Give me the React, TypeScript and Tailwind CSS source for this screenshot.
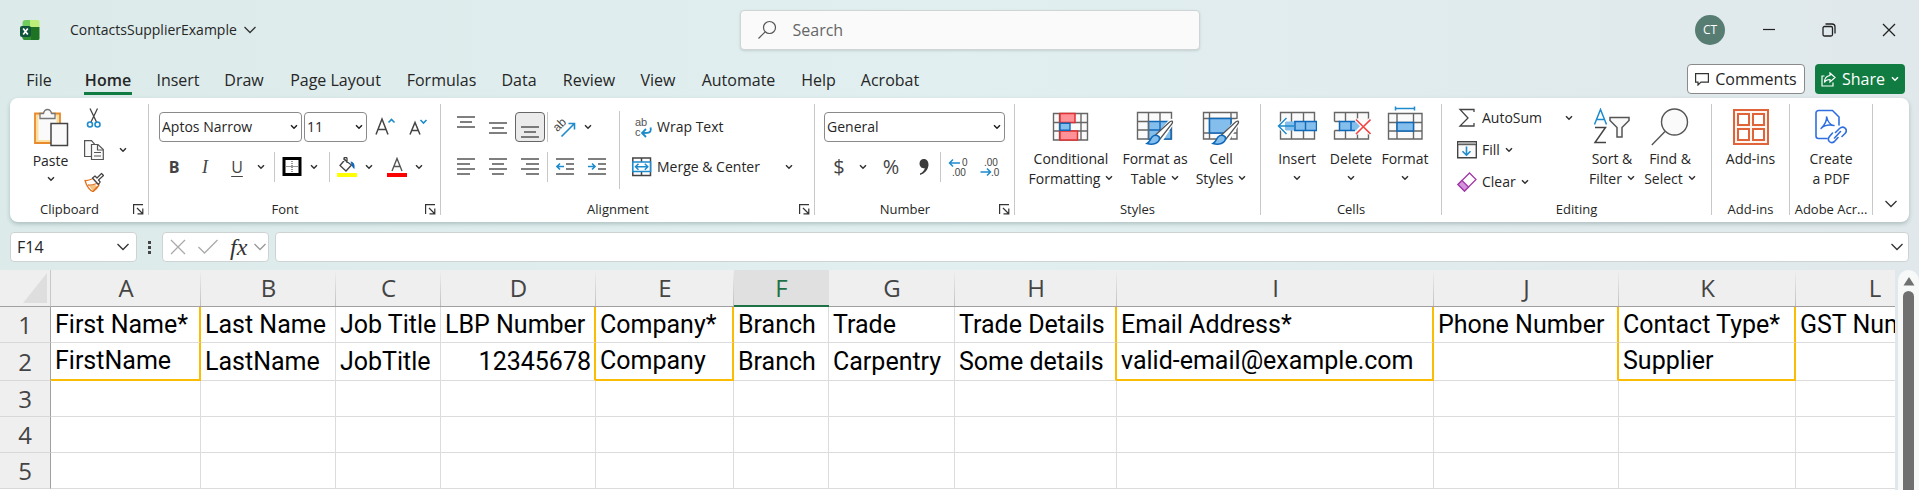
import React, { useState } from 'react';
import clsx from 'clsx';

type IconProps = { className?: string };

const TABS = [
  { name: 'File', width: 'w-[26px]' },
  { name: 'Home', width: 'w-[48px]' },
  { name: 'Insert', width: 'w-[44px]' },
  { name: 'Draw', width: 'w-[40px]' },
  { name: 'Page Layout', width: 'w-[95px]' },
  { name: 'Formulas', width: 'w-[69px]' },
  { name: 'Data', width: 'w-[38px]' },
  { name: 'Review', width: 'w-[54px]' },
  { name: 'View', width: 'w-[36px]' },
  { name: 'Automate', width: 'w-[77px]' },
  { name: 'Help', width: 'w-[35px]' },
  { name: 'Acrobat', width: 'w-[60px]' },
];

const COLUMNS = [
  { id: 'A', width: 'w-[150px]', cells: ['First Name*', 'FirstName'], required: true },
  { id: 'B', width: 'w-[135px]', cells: ['Last Name', 'LastName'] },
  { id: 'C', width: 'w-[105px]', cells: ['Job Title', 'JobTitle'] },
  { id: 'D', width: 'w-[155px]', cells: ['LBP Number', '12345678'] },
  { id: 'E', width: 'w-[138px]', cells: ['Company*', 'Company'], required: true },
  { id: 'F', width: 'w-[95px]', cells: ['Branch', 'Branch'] },
  { id: 'G', width: 'w-[126px]', cells: ['Trade', 'Carpentry'] },
  { id: 'H', width: 'w-[162px]', cells: ['Trade Details', 'Some details'] },
  { id: 'I', width: 'w-[317px]', cells: ['Email Address*', 'valid-email@example.com'], required: true },
  { id: 'J', width: 'w-[185px]', cells: ['Phone Number', ''] },
  { id: 'K', width: 'w-[177px]', cells: ['Contact Type*', 'Supplier'], required: true },
  { id: 'L', width: 'w-[158px]', cells: ['GST Number', ''] },
];

const ROWS = [1, 2, 3, 4, 5];

/* ---------- icons ---------- */

const Chevron: React.FC<IconProps> = ({ className = 'text-[#333]' }) => (
  <svg width="8" height="6" viewBox="0 0 8 6" fill="none" stroke="currentColor" strokeWidth="1.5" className={clsx('shrink-0', className)}>
    <path d="M1 1.2 4 4.2 7 1.2" />
  </svg>
);

const WideChevron: React.FC<IconProps> = ({ className = 'text-[#333]' }) => (
  <svg width="14" height="8" viewBox="0 0 14 8" fill="none" stroke="currentColor" strokeWidth="1.3" className={clsx('shrink-0', className)}>
    <path d="M1.5 1 7 6.5 12.5 1" />
  </svg>
);

const ExcelLogo = () => (
  <svg width="20" height="20" viewBox="0 0 20 20">
    <path d="M10 0h8a1.500 1.500 0 0 1 1.500 1.500V7H10Z" fill="#bdee78" />
    <path d="M2.500 3A3 3 0 0 1 5.500 0H10v7H2.500Z" fill="#6fce5f" />
    <path d="M10 7h9.500v11.500A1.500 1.500 0 0 1 18 20H5.500a3 3 0 0 1-3-3v-4Z" fill="#1f7423" />
    <path d="M2.500 16h8.500v4H5.500a3 3 0 0 1-3-3Z" fill="#2f8f33" />
    <rect y="6" width="11" height="11" rx="2" fill="#10553a" />
    <path d="m3.200 8.500 4.600 6M7.800 8.500l-4.600 6" stroke="#fff" strokeWidth="1.7" />
  </svg>
);

const SearchIcon = () => (
  <svg width="20" height="20" viewBox="0 0 20 20" fill="none" stroke="#555" strokeWidth="1.2" className="shrink-0">
    <circle cx="12.5" cy="7.5" r="6" />
    <path d="m8.200 11.800-6.700 6.700" />
  </svg>
);

const LauncherIcon = () => (
  <svg width="11" height="11" viewBox="0 0 11 11" fill="none" stroke="#333" strokeWidth="1.2">
    <path d="M.6 10V.6H10M4 4l5.500 5.500M9.800 4.500v5.300H4.500" />
  </svg>
);

const PasteIcon = () => (
  <svg width="36" height="40" viewBox="0 0 36 40">
    <path d="M2 5.500h25V35H2Z" fill="#fce0a2" stroke="#e8892b" strokeWidth="1.8" />
    <path d="M5.500 8.500h18V32h-18Z" fill="#fafafa" />
    <path d="M7 10.500v-5h3.500c.5-2.500 2-4 4-4s3.500 1.500 4 4H22v5Z" fill="#f8f8f8" stroke="#777" strokeWidth="1.3" />
    <path d="M18 15.500h16.500v22H18Z" fill="#fafafa" stroke="#444" strokeWidth="1.5" />
  </svg>
);

const CutIcon = () => (
  <svg width="20" height="20" viewBox="0 0 20 20" fill="none" strokeWidth="1.3">
    <path d="M6 .5 12.500 14M13.500.5 7 14" stroke="#444" />
    <circle cx="6" cy="16.5" r="2.500" stroke="#1e8bcd" strokeWidth="1.6" />
    <circle cx="13.5" cy="16.5" r="2.500" stroke="#1e8bcd" strokeWidth="1.6" />
  </svg>
);

const CopyIcon = () => (
  <svg width="20" height="20" viewBox="0 0 20 20" fill="#fafafa" stroke="#555" strokeWidth="1.2">
    <path d="M7 16.500H.6V.6h6.900l3.500 4" />
    <path d="M7.500 4.500H14l5.300 5v10H7.500Z" />
    <path d="M13.500 4.500V10H19M10 12.500h7M10 16h7" fill="none" />
  </svg>
);

const PainterIcon = () => (
  <svg width="20" height="20" viewBox="0 0 20 20" strokeLinejoin="round">
    <path d="M1 8.500C4 9 7 7.500 9 6.500l6 6.500c-1 2-3 5-6 6.500-2.500-.5-6.500-5-8-11Z" fill="#fff" stroke="#e0731d" strokeWidth="1.3" />
    <path d="m5 14 4 5 4-4-2-2.500Z" fill="#f6c283" />
    <path d="M4 13c3 .5 6-.5 9-1.500M9 19.500 14 14" fill="none" stroke="#e0731d" strokeWidth="1.3" />
    <path d="m8.500 6 2.500-2 2 2 4.500-4.500 2 2L14.500 8l1.700 2-1.800 2.500Z" fill="#fff" stroke="#444" strokeWidth="1.2" />
  </svg>
);

const FontSizeIcon = ({ shrink = false }) => (
  <svg width="22" height="22" viewBox="0 0 22 22" fill="none">
    <path d={shrink ? 'm4 18.500 5-12 5 12M5.700 14.500h6.600' : 'M2 18.500 8 3l6 15.500M4.200 13.500h7.600'} stroke="#444" strokeWidth="1.5" />
    <path d={shrink ? 'm14.500 4 3 3 3-3' : 'm14.500 6.500 3-3 3 3'} stroke="#1e8bcd" strokeWidth="1.6" />
  </svg>
);

const BorderIcon = () => (
  <svg width="20" height="20" viewBox="0 0 20 20" fill="none">
    <rect x="2" y="1.5" width="16" height="16" stroke="#000" strokeWidth="3" />
    <path d="M4.500 9.500h11M10 4v11" stroke="#333" strokeDasharray="1 1" />
  </svg>
);

const FillColorIcon = () => (
  <svg width="20" height="20" viewBox="0 0 20 20" fill="none">
    <path d="M8.500 2 3 8.500 9 14l5.500-6L7 2.500v-1C7 0 10 0 10 1.500V6" stroke="#444" strokeWidth="1.3" />
    <path d="M13.500 4.500c3.500.5 4.500 3 4 7.500-1.500-.5-2.500-2.500-3-4.500Z" fill="#1068b8" />
    <path d="M0 16h20v4H0Z" fill="#ff0" />
  </svg>
);

const FontColorIcon = () => (
  <svg width="20" height="20" viewBox="0 0 20 20" fill="none">
    <path d="m5 14 5-12.500L15 14M6.700 9.500h6.600" stroke="#555" strokeWidth="1.4" />
    <path d="M0 16h20v4H0Z" fill="#f00" />
  </svg>
);

// each line is a [start, end] pair, drawn top to bottom
const LinesIcon = ({ lines }: { lines: [number, number][] }) => (
  <svg width="18" height="18" viewBox="0 0 18 18" stroke="#555" strokeWidth="1.6">
    {lines.map(([x1, x2], i) => (
      <path key={i} d={`M${x1} ${1 + i * 5}H${x2}`} />
    ))}
  </svg>
);

const OrientationIcon = () => (
  <svg width="22" height="22" viewBox="0 0 22 22" fill="none" className="overflow-visible">
    <text x="1" y="14" transform="rotate(-45 5 12)" fontFamily="Liberation Sans, sans-serif" fontSize="12" fill="#444">ab</text>
    <path d="M7.500 20.500 20 8M14.500 7.500h6v6" stroke="#1e8bcd" strokeWidth="1.6" />
  </svg>
);

const IndentIcon = ({ right = false }) => (
  <svg width="18" height="18" viewBox="0 0 18 18" fill="none" stroke="#555" strokeWidth="1.6">
    <path d="M0 1h18M10 6h8M10 11h8M0 16h18" />
    <path d={right ? 'M0 8.500h7M4 5.500l3 3-3 3' : 'M8 8.500H1M4 5.500l-3 3 3 3'} stroke="#1e8bcd" />
  </svg>
);

const WrapIcon = () => (
  <svg width="20" height="24" viewBox="0 0 20 24" fill="none">
    <text x="3" y="11" fontFamily="Liberation Sans, sans-serif" fontSize="11" fill="#555">ab</text>
    <text x="3" y="21" fontFamily="Liberation Sans, sans-serif" fontSize="11" fill="#555">c</text>
    <path d="M18.500 12.500c1.500 6-3 5.500-8 5.500M14 14l-4 4 4 4" stroke="#1e8bcd" strokeWidth="1.8" />
  </svg>
);

const MergeIcon = () => (
  <svg width="20" height="20" viewBox="0 0 20 20" fill="none">
    <path d="M.8 1h17.700v17.500H.8ZM9.500 1v4M9.500 14.500v4" stroke="#444" strokeWidth="1.5" />
    <path d="M.8 5h17.700v9.500H.8Z" fill="#fff" stroke="#1e8bcd" strokeWidth="1.6" />
    <path d="M3.500 9.700h12.300M6.500 6.700l-3 3 3 3M12.800 6.700l3 3-3 3" stroke="#1e8bcd" strokeWidth="1.5" />
  </svg>
);

const DecimalIcon = ({ decrease = false }) => (
  <svg width="22" height="22" viewBox="0 0 22 22" fill="none">
    <text x={decrease ? 4 : 14} y="10" fontFamily="Liberation Sans, sans-serif" fontSize="10" fill="#444">{decrease ? '.00' : '0'}</text>
    <text x={decrease ? 11 : 4} y="20" fontFamily="Liberation Sans, sans-serif" fontSize="10" fill="#444">{decrease ? '.0' : '.00'}</text>
    {decrease ? (
      <path d="M.5 16H10.500M7 12.500l3.500 3.500L7 19.500" stroke="#1e8bcd" strokeWidth="1.5" />
    ) : (
      <path d="M12 7H1.500M5 3.500 1.500 7 5 10.500" stroke="#1e8bcd" strokeWidth="1.5" />
    )}
  </svg>
);

const ConditionalIcon = () => (
  <svg width="38" height="36" viewBox="0 0 38 36" fill="none">
    <path d="M1.500 4.500h34V31h-34ZM7.500 4.500V31M29 4.500V31M1.500 13.500h34M1.500 22h34" fill="#fafafa" stroke="#666" strokeWidth="1.4" />
    <path d="M8 4.500h15v9H8ZM8 22h17.500v9H8Z" fill="#ff9298" stroke="#e03131" strokeWidth="1.5" />
    <path d="M8 14.200h10v7.100H8Z" fill="#83beec" stroke="#1068b8" strokeWidth="1.4" />
  </svg>
);

const Brush = () => (
  <g>
    <path d="m20 30 13-16c3-3 5-1.500 3.500 1L25 33Z" fill="#fff" stroke="#fff" strokeWidth="3" />
    <path d="M19.500 27 33 14.500c2.500-2.500 4.500-1.500 3 1.200L24 31Z" fill="#fff" stroke="#555" strokeWidth="1.3" />
    <path d="M11 35.500c3-1.500 3-4 5-6.500 3-3 8-1.500 7.500 2-.5 4-6.500 6.500-12.500 4.500Z" fill="#83beec" stroke="#1068b8" strokeWidth="1.5" />
  </g>
);

const FormatTableIcon = () => (
  <svg width="38" height="38" viewBox="0 0 38 38" fill="none">
    <path d="M1.500 4.500h34V31h-34Z" fill="#fafafa" stroke="#666" strokeWidth="1.4" />
    <path d="M12.500 13.500H35V31H12.500Z" fill="#83beec" stroke="#1068b8" strokeWidth="1.4" />
    <path d="M12.500 22H35M24 13.500V31" stroke="#1068b8" strokeWidth="1.4" />
    <path d="M12.500 4.500V31M24 4.500v9M1.500 13.500h11M1.500 22h11" stroke="#666" strokeWidth="1.4" />
    <Brush />
  </svg>
);

const CellStylesIcon = () => (
  <svg width="38" height="38" viewBox="0 0 38 38" fill="none">
    <path d="M1.500 4.500H35V31H1.500ZM7.500 4.500V31M29 4.500V31M1.500 10.500H35M1.500 25H35" fill="#fafafa" stroke="#666" strokeWidth="1.4" />
    <path d="M7.500 10.500H29V25H7.500Z" fill="#83beec" stroke="#1068b8" strokeWidth="1.5" />
    <Brush />
  </svg>
);

const InsertCellsIcon = () => (
  <svg width="40" height="38" viewBox="0 0 40 38" fill="none">
    <path d="M3.500 4.500h34V31h-34ZM14.500 4.500V31M26.500 4.500V31" fill="#fafafa" stroke="#666" strokeWidth="1.4" />
    <path d="M8 13.500h31.500v9H8Z" fill="#83beec" />
    <path d="M17 13.500h22.500v9H17M18 13.500v9M28.500 13.500v9" stroke="#1068b8" strokeWidth="1.4" />
    <path d="M9 10.500 2 18l7 7.500" stroke="#fff" strokeWidth="4" />
    <path d="M17 18H1.500M9.500 10l-8 8 8 8" stroke="#1e8bcd" strokeWidth="1.5" />
  </svg>
);

const DeleteCellsIcon = () => (
  <svg width="40" height="38" viewBox="0 0 40 38" fill="none">
    <path d="M3.500 4.500h34V31h-34ZM14.500 4.500V31M26.500 4.500V31" fill="#fafafa" stroke="#666" strokeWidth="1.4" />
    <path d="M2 13.500h37v9H2Z" fill="#fff" />
    <path d="M3.500 13.500H9M3.500 22.500H9" stroke="#666" strokeWidth="1.4" />
    <path d="M8.500 13.500H25l4 4.500-4 4.500H8.500Z" fill="#83beec" />
    <path d="M24 13.500H8.500v9H24M20 13.500v9" stroke="#1068b8" strokeWidth="1.5" />
    <path d="m25.500 11.500 14 14M39.500 11.500l-14 14" stroke="#fff" strokeWidth="4" />
    <path d="M25 11.500 39.500 26M39.500 11.500 25 26" stroke="#f04848" strokeWidth="1.6" />
  </svg>
);

const FormatCellsIcon = () => (
  <svg width="38" height="42" viewBox="0 0 38 42" fill="none">
    <path d="M9.500.5v4M28.500.5v4M9.500 2.500h19" stroke="#1e8bcd" strokeWidth="1.5" />
    <path d="M2.500 7.500H36V33H2.500ZM11 7.500V33M27.500 7.500V33M2.500 16.500H36M2.500 25H36" fill="#fafafa" stroke="#666" strokeWidth="1.4" />
    <path d="M11 16.500h16.500V25H11Z" fill="#83beec" stroke="#1068b8" strokeWidth="1.5" />
  </svg>
);

const SumIcon = () => (
  <svg width="20" height="20" viewBox="0 0 20 20" fill="none" stroke="#444" strokeWidth="1.3">
    <path d="M17 4V1.500H3l8 8.500-8 8h14v-3" />
  </svg>
);

const FillIcon = () => (
  <svg width="20" height="20" viewBox="0 0 20 20" fill="none">
    <path d="M.7 1.700h18.600v16.100H.7Z" fill="#fafafa" stroke="#444" strokeWidth="1.4" />
    <path d="M1.400 2.400h17.200v2H1.400Z" fill="#aaa" />
    <path d="M.7 4.700h18.600" stroke="#444" />
    <path d="M9.500 6.500V15M5.500 11.200l4 4 4-4" stroke="#1e8bcd" strokeWidth="1.6" />
  </svg>
);

const ClearIcon = () => (
  <svg width="20" height="20" viewBox="0 0 20 20" fill="none" stroke="#a13aa8" strokeWidth="1.3">
    <path d="M1 12.500 12.500 1 19 7.500 7.500 19Z" fill="#fff" />
    <path d="m1 12.500 4-4 6.500 6.500-4 4Z" fill="#d494dc" />
  </svg>
);

const SortFilterIcon = () => (
  <svg width="38" height="38" viewBox="0 0 38 38" fill="none">
    <path d="m1.500 16.500 6-15 6 15M3.700 11.500h7.600" stroke="#1e8bcd" strokeWidth="1.5" />
    <path d="M2 19.500h10.500L2 34.500h11" stroke="#444" strokeWidth="1.5" />
    <path d="M17 9.500h19v3l-7 7V29h-5v-9.500l-7-7Z" fill="#fafafa" stroke="#555" strokeWidth="1.5" />
  </svg>
);

const FindIcon = () => (
  <svg width="38" height="38" viewBox="0 0 38 38" fill="none" stroke="#555" strokeWidth="1.4">
    <circle cx="23.5" cy="14" r="13" fill="#fafafa" />
    <path d="M14 23.500.8 37" />
  </svg>
);

const AddInsIcon = () => (
  <svg width="36" height="36" viewBox="0 0 36 36" fill="none" stroke="#e0643a" strokeWidth="2">
    <rect x="1" y="1" width="34" height="34" fill="#fff6f2" />
    <path d="M5 5h11v11H5ZM20 5h11v11H20ZM5 20h11v11H5ZM20 20h11v11H20Z" fill="#fff" />
  </svg>
);

const PdfIcon = () => (
  <svg width="32" height="36" viewBox="0 0 32 36" fill="none" stroke="#2f6fe0" strokeWidth="1.6" strokeLinecap="round">
    <path d="M12 29.500H3.500A2.500 2.500 0 0 1 1 27V4a2.500 2.500 0 0 1 2.500-2.500h14L24 8v8" />
    <path d="M6 19.500c3-3 6-8 5.500-12 1 5 4 9 7.500 9M6 19.500c3-3 8-4 13-3" strokeWidth="1.4" />
    <path d="m20.500 23.500 4-4c4-3.500 9 1 5.500 5l-3 3M23 28.500l-3.500 4c-4 3-8-1.500-5-5l3-3.500M19.500 29l6-6.500" />
  </svg>
);

/* ---------- ribbon parts ---------- */

const Separator: React.FC<IconProps> = ({ className = 'h-[30px]' }) => <div className={clsx('w-px shrink-0 bg-[#c8c8c8]', className)} />;

interface ToolProps {
  label: string;
  className?: string;
  children: React.ReactNode;
}

const Tool: React.FC<ToolProps> = ({ label, className = 'w-[30px]', children }) => (
  <button type="button" aria-label={label} className={clsx('flex h-[30px] shrink-0 items-center justify-center rounded-[4px]', className)}>
    {children}
  </button>
);

interface ComboProps {
  label: string;
  value: string;
  className: string;
}

const Combo: React.FC<ComboProps> = ({ label, value, className }) => (
  <div className={clsx('grid h-[30px] items-center rounded-[4px] border border-[#8a8a8a] bg-white', className)}>
    <select aria-label={label} className="col-start-1 row-start-1 h-full w-full appearance-none bg-transparent pl-0.5 text-sm outline-none">
      <option>{value}</option>
    </select>
    <Chevron className="pointer-events-none col-start-1 row-start-1 mr-[3px] justify-self-end text-[#222]" />
  </div>
);

interface BigToolProps {
  icon: React.ReactNode;
  lines: string[];
  className: string;
  menu?: boolean;
}

const BigTool: React.FC<BigToolProps> = ({ icon, lines, className, menu = true }) => (
  <button type="button" className={clsx('flex shrink-0 flex-col items-center text-sm leading-5', className)}>
    <span className="flex h-[45px] items-center justify-center">{icon}</span>
    <span>{lines[0]}</span>
    <span className="flex h-5 items-center gap-[5px] whitespace-nowrap">
      {lines[1]}
      {menu && <Chevron className="mb-0.5 text-[#333]" />}
    </span>
  </button>
);

interface GroupProps {
  name: string;
  width: string;
  launcher?: boolean;
  children: React.ReactNode;
}

const Group: React.FC<GroupProps> = ({ name, width, launcher, children }) => (
  <section aria-label={name} className={clsx('flex h-[111px] shrink-0 flex-col justify-between border-r border-[#c8c8c8]', width)}>
    {children}
    <div className="flex h-3 items-center text-[13px] leading-3">
      <span className={clsx('flex-1 text-center whitespace-nowrap', launcher && 'pr-1')}>{name}</span>
      {launcher && (
        <button type="button" aria-label={`${name} settings`} className="mr-1">
          <LauncherIcon />
        </button>
      )}
    </div>
  </section>
);

const TitleBar = () => (
  <header className="flex h-[60px] items-center">
    <div className="flex flex-1 items-center pl-5">
      <ExcelLogo />
      <button type="button" className="ml-[30px] flex items-center gap-1.5 text-sm">
        ContactsSupplierExample
        <WideChevron />
      </button>
    </div>
    <label className="flex h-10 w-[460px] items-center gap-4 rounded-[4px] border border-[#cfd4d4] bg-[#fafafa] px-4 shadow-sm">
      <SearchIcon />
      <input type="search" aria-label="Search" placeholder="Search" className="w-full bg-transparent text-base outline-none placeholder:text-[#666]" />
    </label>
    <div className="flex flex-1 items-center justify-end">
      <button type="button" className="mr-3.5 h-[30px] w-[30px] rounded-full bg-[#577d73] text-xs text-white">CT</button>
      <button type="button" aria-label="Minimize" className="flex w-[60px] justify-center">
        <svg width="12" height="12" viewBox="0 0 12 12" stroke="#222" strokeWidth="1.2"><path d="M0 5.500h12" /></svg>
      </button>
      <button type="button" aria-label="Restore" className="flex w-[60px] justify-center">
        <svg width="14" height="14" viewBox="0 0 14 14" fill="none" stroke="#222" strokeWidth="1.3">
          <rect x="1" y="3.5" width="9.5" height="9.5" rx="1.5" />
          <path d="M3.500 1H10a3 3 0 0 1 3 3v6.500" />
        </svg>
      </button>
      <button type="button" aria-label="Close" className="flex w-[60px] justify-center">
        <svg width="14" height="14" viewBox="0 0 14 14" stroke="#222" strokeWidth="1.3"><path d="m1 1 12 12M13 1 1 13" /></svg>
      </button>
    </div>
  </header>
);

const TabBar = () => {
  const [active, setActive] = useState('Home');
  return (
    <nav className="flex h-[38px] items-start pr-[14px] pl-[26px]">
      <div className="flex flex-1 gap-6">
        {TABS.map((tab, i) => (
          <button
            key={tab.name}
            type="button"
            onClick={() => setActive(tab.name)}
            className={clsx(
              'mt-2 flex h-[27px] items-start justify-center border-b-3 text-base leading-6 whitespace-nowrap',
              tab.width,
              i === 0 && 'mr-2',
              active === tab.name ? 'border-[#107c41] font-semibold' : 'border-transparent'
            )}
          >
            {tab.name}
          </button>
        ))}
      </div>
      <div className="mt-1 flex gap-2.5">
        <button type="button" className="flex h-[30px] w-[118px] items-center justify-center gap-1.5 rounded-[4px] border border-[#8a8a8a] bg-white text-base">
          <svg width="14" height="14" viewBox="0 0 14 14" fill="none" stroke="#333" strokeWidth="1.2"><path d="M.6 1.600h12.800v8.500H6L3 13v-2.900H.6Z" /></svg>
          Comments
        </button>
        <button type="button" className="flex h-[30px] w-[90px] items-center justify-center gap-1.5 rounded-[4px] bg-[#107c41] text-base text-white">
          <svg width="15" height="15" viewBox="0 0 15 15" fill="none" stroke="#fff" strokeWidth="1.2">
            <path d="M3.500 4H1v10h11v-3.500M9 1l5 4.500L9 10V7.500c-3 0-4.500 1-5.500 3 0-4 2-6.500 5.500-7Z" />
          </svg>
          Share
          <Chevron className="text-white" />
        </button>
      </div>
    </nav>
  );
};

const Ribbon = () => (
  <div className="mx-2.5 flex h-[124px] overflow-hidden rounded-lg bg-white py-1.5 shadow-[0_2px_4px_rgba(60,90,90,0.3)]">
    <Group name="Clipboard" width="w-[139px]" launcher>
      <div className="flex pt-1">
        <button type="button" className="ml-5 flex w-[41px] flex-col items-center text-sm leading-5">
          <PasteIcon />
          <span className="mt-[3px]">Paste</span>
          <span className="flex h-4 items-center"><Chevron /></span>
        </button>
        <div className="ml-[13px] flex w-5 flex-col gap-3">
          <button type="button" aria-label="Cut"><CutIcon /></button>
          <button type="button" aria-label="Copy"><CopyIcon /></button>
          <button type="button" aria-label="Format Painter"><PainterIcon /></button>
        </div>
        <Tool label="Copy options" className="mt-[27px] ml-[9px] w-5"><Chevron /></Tool>
      </div>
    </Group>

    <Group name="Font" width="w-[292px]" launcher>
      <div className="flex flex-col gap-2.5 pt-2 pl-2.5">
        <div className="flex">
          <Combo label="Font name" value="Aptos Narrow" className="mr-0.5 w-[143px]" />
          <Combo label="Font size" value="11" className="mr-0.5 w-[63px]" />
          <Tool label="Increase font size" className="w-8"><FontSizeIcon /></Tool>
          <Tool label="Decrease font size" className="w-8"><FontSizeIcon shrink /></Tool>
        </div>
        <div className="flex">
          <Tool label="Bold"><span className="text-base font-bold text-[#444]">B</span></Tool>
          <Tool label="Italic" className="w-8"><span className="font-['Liberation_Serif',serif] text-lg text-[#444] italic">I</span></Tool>
          <Tool label="Underline" className="w-8"><span className="text-base text-[#444] underline underline-offset-3">U</span></Tool>
          <Tool label="Underline options" className="w-4"><Chevron /></Tool>
          <Separator className="mx-[5px] h-[30px]" />
          <Tool label="Borders" className="w-6"><BorderIcon /></Tool>
          <Tool label="Border options" className="w-5"><Chevron /></Tool>
          <Separator className="mx-[5px] h-[30px]" />
          <Tool label="Fill color" className="w-6"><FillColorIcon /></Tool>
          <Tool label="Fill color options" className="w-5"><Chevron /></Tool>
          <Tool label="Font color" className="ml-1.5 w-6"><FontColorIcon /></Tool>
          <Tool label="Font color options" className="w-5"><Chevron /></Tool>
        </div>
      </div>
    </Group>

    <Group name="Alignment" width="w-[374px]" launcher>
      <div className="flex pl-2.5">
        <div className="flex w-[168px] flex-col gap-2.5 pt-2">
          <div className="flex gap-0.5">
            <Tool label="Top align" className="w-[30px] pb-1"><LinesIcon lines={[[0, 18], [3, 15], [0, 18]]} /></Tool>
            <Tool label="Middle align" className="w-[30px] pt-2"><LinesIcon lines={[[0, 18], [3, 15], [0, 18]]} /></Tool>
            <Tool label="Bottom align" className="w-[30px] border border-[#666] bg-[#ebebeb] pt-4"><LinesIcon lines={[[0, 18], [3, 15], [0, 18]]} /></Tool>
            <Separator />
            <Tool label="Orientation"><OrientationIcon /></Tool>
            <Tool label="Orientation options" className="w-3"><Chevron /></Tool>
          </div>
          <div className="flex gap-0.5">
            <Tool label="Align left"><LinesIcon lines={[[0, 18], [0, 13], [0, 18], [0, 13]]} /></Tool>
            <Tool label="Center"><LinesIcon lines={[[0, 18], [3, 15], [0, 18], [3, 15]]} /></Tool>
            <Tool label="Align right"><LinesIcon lines={[[0, 18], [5, 18], [0, 18], [5, 18]]} /></Tool>
            <Separator />
            <Tool label="Decrease indent"><IndentIcon /></Tool>
            <Tool label="Increase indent"><IndentIcon right /></Tool>
          </div>
        </div>
        <Separator className="mt-[7px] h-[78px]" />
        <div className="flex flex-col gap-2.5 pt-2 pl-3 text-sm">
          <button type="button" className="flex h-[30px] items-center gap-[5px]"><WrapIcon />Wrap Text</button>
          <div className="flex">
            <button type="button" className="flex h-[30px] w-[132px] items-center gap-[5px] whitespace-nowrap"><MergeIcon />Merge &amp; Center</button>
            <Tool label="Merge options" className="ml-[15px] w-5"><Chevron /></Tool>
          </div>
        </div>
      </div>
    </Group>

    <Group name="Number" width="w-[200px]" launcher>
      <div className="flex flex-col gap-2.5 px-[9px] pt-2">
        <Combo label="Number format" value="General" className="w-full" />
        <div className="flex">
          <Tool label="Accounting format"><span className="text-xl text-[#444]">$</span></Tool>
          <Tool label="Accounting options" className="w-[18px]"><Chevron /></Tool>
          <Tool label="Percent" className="ml-2 w-[22px]"><span className="text-xl text-[#444]">%</span></Tool>
          <Tool label="Comma" className="ml-2.5 w-6">
            <svg width="10" height="18" viewBox="0 0 10 18" fill="#3b3b3b"><path d="M4.800 1C8 1 9.500 3.500 9.500 6.500c0 5-3.500 9-8.500 10.500v-1.500c3-1.300 4.500-3.300 4.800-5.500C3 11 .5 8.500.5 5.500.5 3 2.300 1 4.800 1Z" /></svg>
          </Tool>
          <Separator className="ml-1 h-[30px]" />
          <Tool label="Increase decimal" className="ml-0.5 w-8"><DecimalIcon /></Tool>
          <Tool label="Decrease decimal" className="w-8"><DecimalIcon decrease /></Tool>
        </div>
      </div>
    </Group>

    <Group name="Styles" width="w-[246px]">
      <div className="flex pl-[9px]">
        <BigTool icon={<ConditionalIcon />} lines={['Conditional', 'Formatting']} className="w-[94px]" />
        <BigTool icon={<FormatTableIcon />} lines={['Format as', 'Table']} className="w-[74px]" />
        <BigTool icon={<CellStylesIcon />} lines={['Cell', 'Styles']} className="w-[58px]" />
      </div>
    </Group>

    <Group name="Cells" width="w-[181px]">
      <div className="flex pl-[9px]">
        <BigTool icon={<InsertCellsIcon />} lines={['Insert', '']} className="w-[54px]" />
        <BigTool icon={<DeleteCellsIcon />} lines={['Delete', '']} className="w-[54px]" />
        <BigTool icon={<FormatCellsIcon />} lines={['Format', '']} className="w-[54px]" />
      </div>
    </Group>

    <Group name="Editing" width="w-[270px]">
      <div className="flex pl-[15px]">
        <div className="flex w-[126px] flex-col gap-3 pt-1 text-sm leading-5">
          <div className="flex h-5 items-center">
            <button type="button" className="flex w-[108px] gap-[5px]"><SumIcon />AutoSum</button>
            <Chevron />
          </div>
          <button type="button" className="flex items-center gap-[5px]"><FillIcon />Fill<Chevron /></button>
          <button type="button" className="flex items-center gap-[5px]"><ClearIcon />Clear<Chevron /></button>
        </div>
        <BigTool icon={<SortFilterIcon />} lines={['Sort &', 'Filter']} className="w-[58px]" />
        <BigTool icon={<FindIcon />} lines={['Find &', 'Select']} className="w-[58px]" />
      </div>
    </Group>

    <Group name="Add-ins" width="w-[78px]">
      <BigTool icon={<AddInsIcon />} lines={['Add-ins', '']} className="w-full" menu={false} />
    </Group>

    <Group name="Adobe Acr..." width="w-[83px]">
      <BigTool icon={<PdfIcon />} lines={['Create', 'a PDF']} className="w-full" menu={false} />
    </Group>

    <button type="button" aria-label="Ribbon display options" className="flex flex-1 items-end justify-center pb-2">
      <WideChevron />
    </button>
  </div>
);

const FormulaBar = () => (
  <div className="mx-2.5 mt-2.5 mb-2 flex h-[30px]">
    <div className="flex w-[127px] items-center rounded-[4px] border border-[#cfd2d2] bg-white pr-1.5 pl-1.5">
      <input aria-label="Name box" defaultValue="F14" className="w-full bg-transparent text-base outline-none" />
      <button type="button" aria-label="Name list"><WideChevron /></button>
    </div>
    <div className="flex w-[25px] flex-col items-center justify-center gap-0.5">
      <span className="h-[3px] w-[3px] bg-[#444]" />
      <span className="h-[3px] w-[3px] bg-[#444]" />
      <span className="h-[3px] w-[3px] bg-[#444]" />
    </div>
    <div className="flex w-[107px] items-center rounded-[4px] border border-[#cfd2d2] bg-white pl-[7px]">
      <button type="button" aria-label="Cancel">
        <svg width="16" height="16" viewBox="0 0 16 16" stroke="#aaa" strokeWidth="1.3"><path d="m1 1 14 14M15 1 1 15" /></svg>
      </button>
      <button type="button" aria-label="Enter" className="ml-3">
        <svg width="20" height="16" viewBox="0 0 20 16" fill="none" stroke="#aaa" strokeWidth="1.3"><path d="m.5 8 6 6L19.500 1" /></svg>
      </button>
      <button type="button" className="ml-3 font-['Liberation_Serif',serif] text-2xl leading-6 text-[#333] italic">fx</button>
      <button type="button" aria-label="Function list" className="ml-1.5"><WideChevron className="text-[#999]" /></button>
    </div>
    <div className="ml-1.5 flex flex-1 items-center rounded-[4px] border border-[#cfd2d2] bg-white pr-1">
      <input aria-label="Formula bar" className="flex-1 bg-transparent px-2 text-sm outline-none" />
      <button type="button" aria-label="Expand formula bar"><WideChevron /></button>
    </div>
  </div>
);

const Sheet = () => {
  const selected = 'F';

  // Required columns are outlined, so the neighbour on the left carries the shared edge
  const hasOutlineRight = (index: number) => COLUMNS[index].required || COLUMNS[index + 1]?.required;

  return (
    <div className="flex min-h-0 flex-1">
      <div className="min-w-0 flex-1 overflow-hidden bg-white">
        <table className="w-0 table-fixed border-separate border-spacing-0">
          <thead>
            <tr className="h-[37px] bg-[#efefef] font-['Open_Sans',sans-serif] text-2xl leading-8 text-[#444]">
              <th className="w-[51px] border-r border-b border-r-[#c8c8c8] border-b-[#a0a0a0] p-0">
                <svg width="24" height="30" viewBox="0 0 24 30" className="mr-[3px] ml-auto" aria-hidden="true"><path d="M24 0v30H0Z" fill="#dedede" /></svg>
              </th>
              {COLUMNS.map(col => (
                <th
                  key={col.id}
                  className={clsx(
                    'p-0 text-center font-normal',
                    col.width,
                    col.id === selected
                      ? 'border-b-2 border-[#1e7145] bg-[#e0e0e0] text-[#1e7145]'
                      : 'border-b border-[#a0a0a0] bg-[linear-gradient(#efefef,#c0c0c0)] bg-[length:1px_100%] bg-right bg-no-repeat'
                  )}
                >
                  {col.id}
                </th>
              ))}
            </tr>
          </thead>
          <tbody>
            {ROWS.map(row => (
              <tr key={row} className={row === 2 ? 'h-[38px]' : 'h-[36px]'}>
                <th className="border-r border-b border-r-[#a0a0a0] border-b-[#d8d8d8] bg-[#efefef] p-0 font-['Open_Sans',sans-serif] text-2xl leading-8 font-normal text-[#444]">
                  {row}
                </th>
                {COLUMNS.map((col, i) => {
                  const value = col.cells[row - 1];
                  return (
                    <td
                      key={col.id}
                      className={clsx(
                        "overflow-hidden p-0 pr-[3px] pl-1 font-['Roboto',sans-serif] text-[25px] leading-8 whitespace-nowrap text-black",
                        value && /^\d+$/.test(value) ? 'text-right' : 'text-left',
                        row <= 2 && hasOutlineRight(i) ? 'border-r-2 border-r-[#fbbc04]' : 'border-r border-r-[#dcdcdc]',
                        row === 2 && col.required ? 'border-b-2 border-b-[#fbbc04]' : 'border-b border-b-[#dcdcdc]'
                      )}
                    >
                      {value}
                    </td>
                  );
                })}
              </tr>
            ))}
          </tbody>
        </table>
      </div>
      <div className="ml-[3px] flex w-[21px] flex-col items-center rounded-t-full bg-[#f7f9f9] pt-[7px]">
        <svg width="12" height="9" viewBox="0 0 12 9" fill="#707070"><path d="M6 0 11.500 8.500H.5Z" /></svg>
        <div className="mt-[5px] w-[11px] flex-1 rounded-t-full bg-[#707070]" />
      </div>
    </div>
  );
};

export default function App() {
  return (
    <div className="flex min-h-screen flex-col bg-linear-to-r from-[#dceaea] via-[#e1eff0] to-[#e0e8eb] font-['Open_Sans',sans-serif] text-[#262626]">
      <TitleBar />
      <TabBar />
      <Ribbon />
      <FormulaBar />
      <Sheet />
    </div>
  );
}
